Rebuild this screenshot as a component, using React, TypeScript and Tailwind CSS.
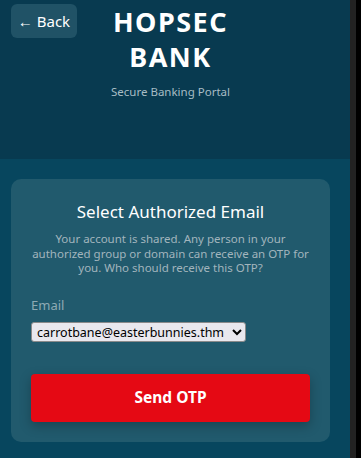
import React from "react";

export default function App() {
  return (
    <div className="flex h-[458px] w-[361px] overflow-hidden bg-black" style={{ fontFamily: '"Noto Sans", "Open Sans", sans-serif' }}>
      <div className="flex w-[350px] flex-col bg-[#07465e]">
        <header className="relative h-[159px] bg-[#083a50] pt-[4px] text-center">
          <button className="absolute left-[11px] top-[4px] h-[34px] w-[66px] rounded-[6px] bg-[#205266] text-[15px] text-white">
            ← Back
          </button>
          <h1 className="mr-[9px] text-[27px] font-bold leading-[35px] tracking-[1.5px] text-white">
            HOPSEC
            <br />
            BANK
          </h1>
          <p className="mr-[9px] mt-[9px] text-[11.5px] text-[#a7bcc4]">Secure Banking Portal</p>
        </header>
        <main className="pl-[11px] pr-[20px] pt-[20px]">
          <div className="rounded-[10px] bg-[#215a6d] px-[20px] pb-[20px] pt-[20px] text-center">
            <h2 className="text-[17px] leading-[26px] text-white">Select Authorized Email</h2>
            <p className="mt-[7px] text-[11.5px] leading-[14.5px] text-[#a2b5bd]">
              Your account is shared. Any person in your authorized group or domain can receive an OTP for you. Who should receive this OTP?
            </p>
            <div className="mt-[20px] text-left">
              <label className="block text-[13px] leading-[18px] text-[#8eaab4]">Email</label>
              <select
                className="mt-[8px] h-[20px] rounded-[3px] border border-[#8a8a8a] bg-[#e9e8ee] pl-[1px] pr-[4px] text-[12.5px] text-black"
                style={{ fontFamily: '"Noto Sans", sans-serif' }}
                defaultValue="carrotbane@easterbunnies.thm"
              >
                <option>carrotbane@easterbunnies.thm</option>
              </select>
            </div>
            <button className="mt-[31px] h-[48px] w-full rounded-[4px] bg-[#e50914] text-[15.5px] font-bold text-white shadow-[0_4px_12px_rgba(0,0,0,0.25)]">
              Send OTP
            </button>
          </div>
        </main>
      </div>
      <div className="w-[6px] bg-[#222222]" />
      <div className="flex-1 bg-black" />
    </div>
  );
}
